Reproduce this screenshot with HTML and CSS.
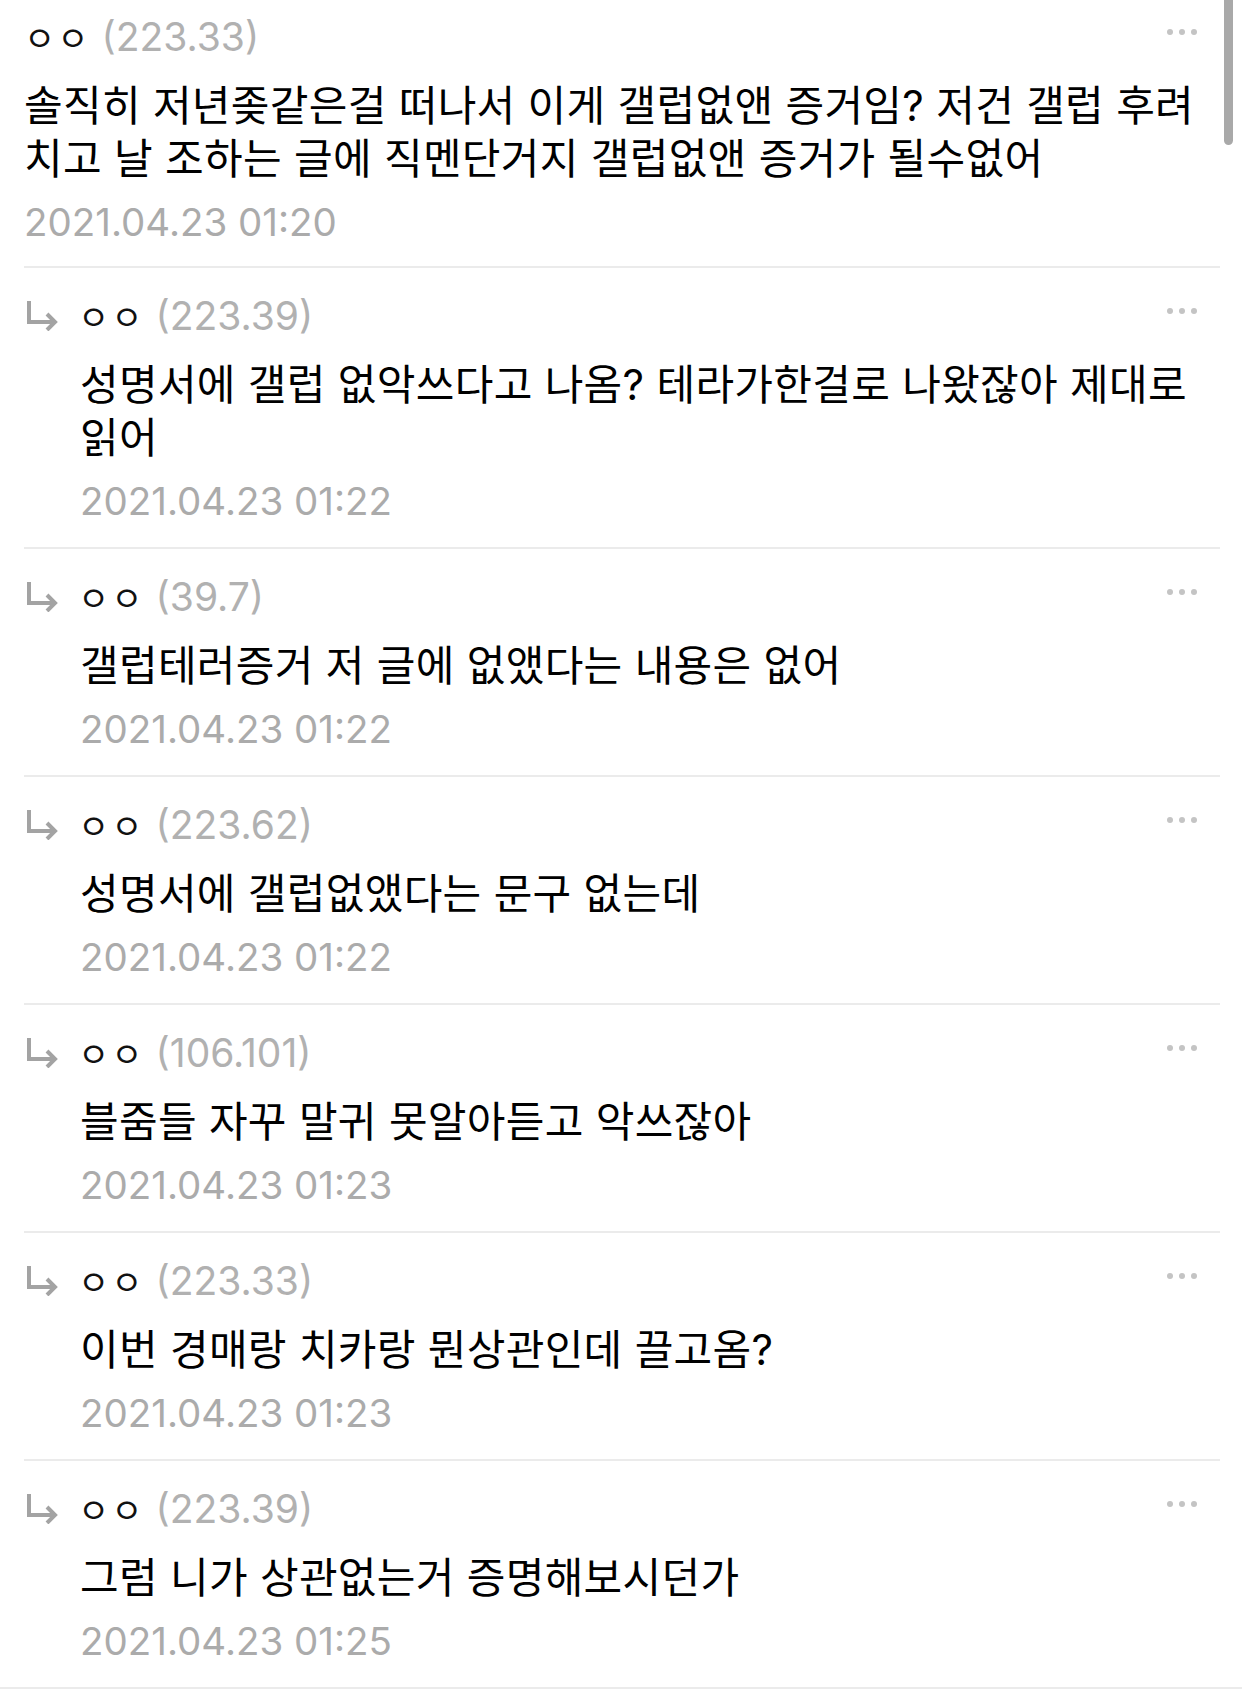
FILE: index.html
```html
<!DOCTYPE html>
<html lang="ko">
<head>
<meta charset="utf-8">
<link rel="stylesheet" href="styles.css">
</head>
<body>
<div class="list">
  <div class="comment first">
    <div class="head">
      <span class="name">ㅇㅇ</span><span class="ip">(223.33)</span>
      <span class="more"><i></i><i></i><i></i></span>
    </div>
    <div class="text">솔직히 저년좆같은걸 떠나서 이게 갤럽없앤 증거임? 저건 갤럽 후려치고 날 조하는 글에 직멘단거지 갤럽없앤 증거가 될수없어</div>
    <div class="date">2021.04.23 01:20</div>
  </div>

  <div class="comment reply">
    <div class="head">
      <svg class="arrow" viewBox="0 0 32 30"><path d="M3 0 V21 H29 M21 13 L29 21 L21 29" fill="none" stroke="#a3a3a3" stroke-width="4"/></svg>
      <span class="name">ㅇㅇ</span><span class="ip">(223.39)</span>
      <span class="more"><i></i><i></i><i></i></span>
    </div>
    <div class="text">성명서에 갤럽 없악쓰다고 나옴? 테라가한걸로 나왔잖아 제대로 읽어</div>
    <div class="date">2021.04.23 01:22</div>
  </div>

  <div class="comment reply">
    <div class="head">
      <svg class="arrow" viewBox="0 0 32 30"><path d="M3 0 V21 H29 M21 13 L29 21 L21 29" fill="none" stroke="#a3a3a3" stroke-width="4"/></svg>
      <span class="name">ㅇㅇ</span><span class="ip">(39.7)</span>
      <span class="more"><i></i><i></i><i></i></span>
    </div>
    <div class="text">갤럽테러증거 저 글에 없앴다는 내용은 없어</div>
    <div class="date">2021.04.23 01:22</div>
  </div>

  <div class="comment reply">
    <div class="head">
      <svg class="arrow" viewBox="0 0 32 30"><path d="M3 0 V21 H29 M21 13 L29 21 L21 29" fill="none" stroke="#a3a3a3" stroke-width="4"/></svg>
      <span class="name">ㅇㅇ</span><span class="ip">(223.62)</span>
      <span class="more"><i></i><i></i><i></i></span>
    </div>
    <div class="text">성명서에 갤럽없앴다는 문구 없는데</div>
    <div class="date">2021.04.23 01:22</div>
  </div>

  <div class="comment reply">
    <div class="head">
      <svg class="arrow" viewBox="0 0 32 30"><path d="M3 0 V21 H29 M21 13 L29 21 L21 29" fill="none" stroke="#a3a3a3" stroke-width="4"/></svg>
      <span class="name">ㅇㅇ</span><span class="ip">(106.101)</span>
      <span class="more"><i></i><i></i><i></i></span>
    </div>
    <div class="text">블줌들 자꾸 말귀 못알아듣고 악쓰잖아</div>
    <div class="date">2021.04.23 01:23</div>
  </div>

  <div class="comment reply">
    <div class="head">
      <svg class="arrow" viewBox="0 0 32 30"><path d="M3 0 V21 H29 M21 13 L29 21 L21 29" fill="none" stroke="#a3a3a3" stroke-width="4"/></svg>
      <span class="name">ㅇㅇ</span><span class="ip">(223.33)</span>
      <span class="more"><i></i><i></i><i></i></span>
    </div>
    <div class="text">이번 경매랑 치카랑 뭔상관인데 끌고옴?</div>
    <div class="date">2021.04.23 01:23</div>
  </div>

  <div class="comment reply last">
    <div class="head">
      <svg class="arrow" viewBox="0 0 32 30"><path d="M3 0 V21 H29 M21 13 L29 21 L21 29" fill="none" stroke="#a3a3a3" stroke-width="4"/></svg>
      <span class="name">ㅇㅇ</span><span class="ip">(223.39)</span>
      <span class="more"><i></i><i></i><i></i></span>
    </div>
    <div class="text">그럼 니가 상관없는거 증명해보시던가</div>
    <div class="date">2021.04.23 01:25</div>
  </div>
</div>
<div class="scrollbar"></div>
</body>
</html>
```
FILE: styles.css
```css
html, body {
  margin: 0;
  padding: 0;
  background: #ffffff;
}
body {
  width: 1242px;
  height: 1705px;
  overflow: hidden;
  position: relative;
  font-family: "Inter", "Noto Sans CJK KR", sans-serif;
  color: #000;
}
.list {
  display: flex;
  flex-direction: column;
}
.comment {
  margin: 0 22px 0 24px;
  padding: 22px 0 21px 2px;
  border-bottom: 2px solid #ebebeb;
  display: flex;
  flex-direction: column;
}
.comment.first {
  padding-top: 11px;
  padding-bottom: 19px;
  padding-left: 0;
}
.comment.last {
  margin: 0;
  padding-left: 26px;
  padding-right: 22px;
}
.head {
  display: flex;
  align-items: center;
  height: 50px;
  font-size: 39px;
}
.name {
  font-family: "Noto Sans CJK KR", sans-serif;
  font-size: 34px;
  color: #111;
  letter-spacing: 2px;
}
.ip {
  margin-left: 11px;
  color: #b1b1b1;
}
.arrow {
  width: 32px;
  height: 30px;
  margin-right: 20px;
  margin-top: 2px;
}
.more {
  margin-left: auto;
  margin-right: 23px;
  display: flex;
  gap: 6px;
  align-self: flex-start;
  margin-top: 18px;
}
.more i {
  display: block;
  width: 6px;
  height: 6px;
  border-radius: 50%;
  background: #c4c4c4;
}
.text {
  margin-top: 18px;
  font-size: 42px;
  line-height: 53px;
  letter-spacing: 0.3px;
  color: #000;
}
.reply .text,
.reply .date {
  padding-left: 54px;
}
.date {
  margin-top: 12px;
  font-size: 38.5px;
  line-height: 50px;
  color: #ababab;
}
.scrollbar {
  position: absolute;
  top: 0;
  left: 1224px;
  width: 9px;
  height: 145px;
  border-radius: 0 0 5px 5px;
  background: #a9a9a9;
}
```
